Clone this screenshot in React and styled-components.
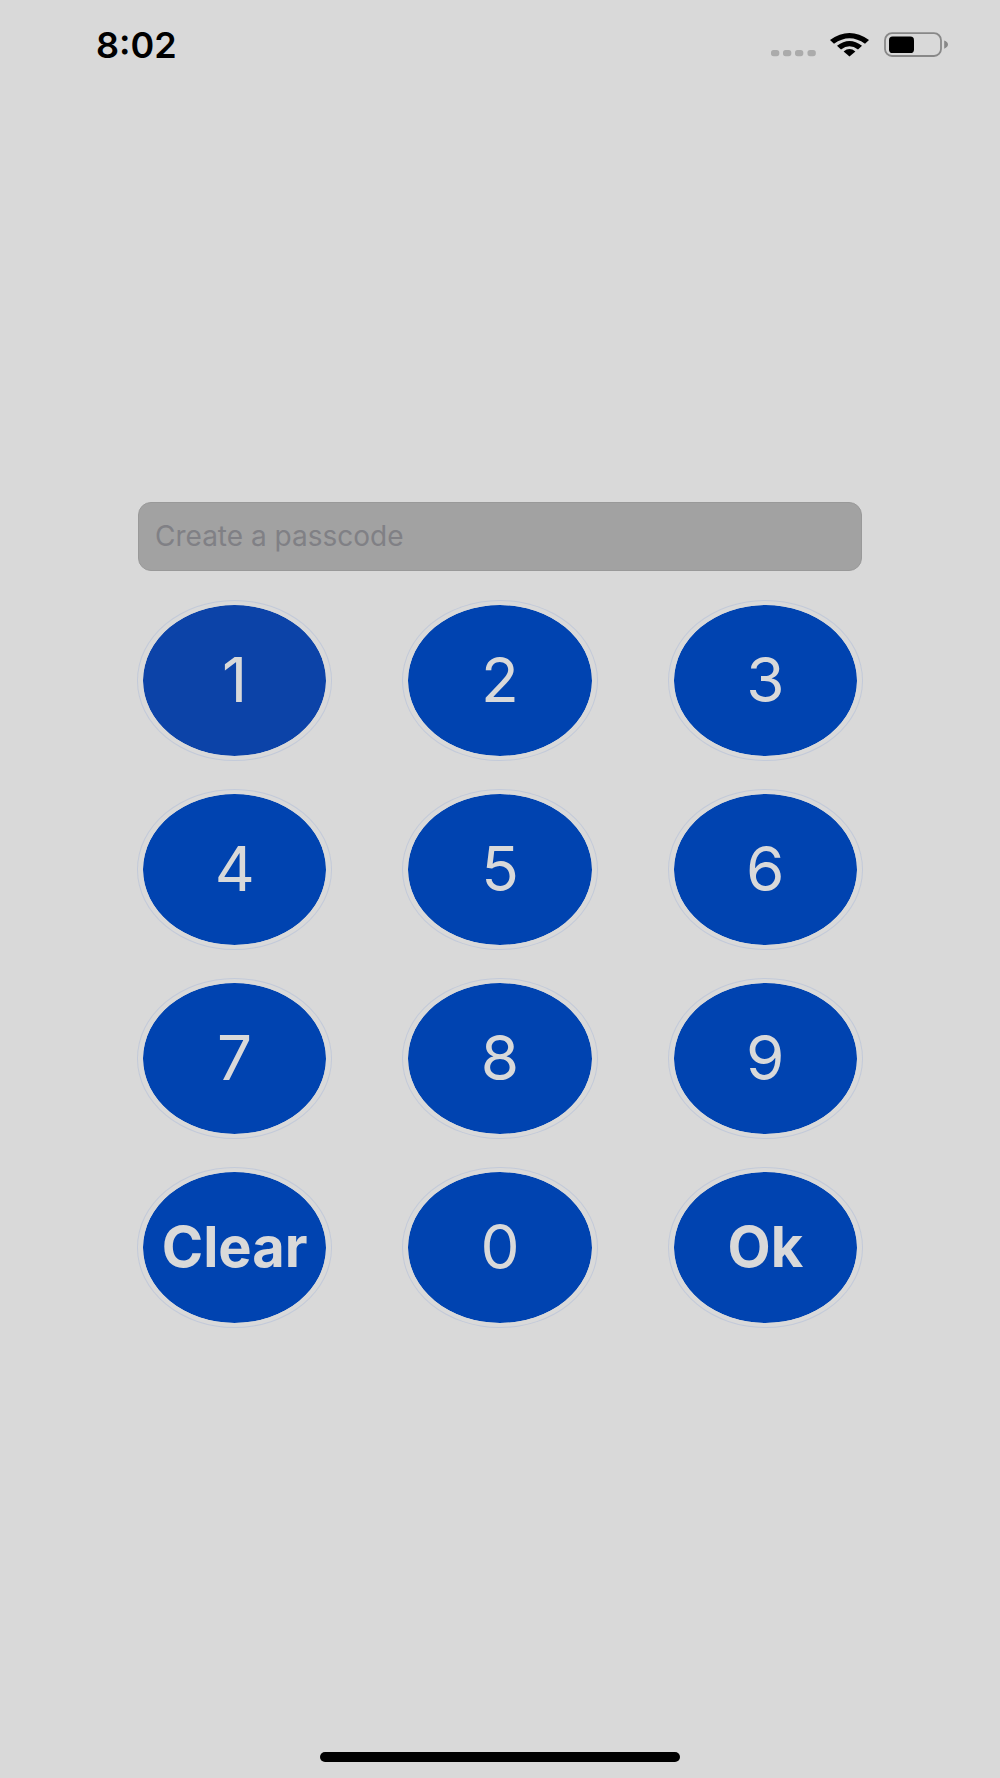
import React, { useState } from 'react';
import styled, { createGlobalStyle } from 'styled-components';

const GlobalStyle = createGlobalStyle`
  * {
    box-sizing: border-box;
  }
  body {
    margin: 0;
    background: #d9d9d9;
    font-family: Inter, "Liberation Sans", sans-serif;
  }
`;

const Screen = styled.div`
  display: flex;
  flex-direction: column;
  min-height: 100vh;
`;

const StatusBar = styled.header`
  display: flex;
  align-items: center;
  justify-content: space-between;
  height: 96px;
  padding: 0 52px 6px 96px;
`;

const Clock = styled.time`
  color: #000;
  font-size: 36px;
  font-weight: 600;
  line-height: 40px;
`;

const Main = styled.main`
  flex: 1;
  display: flex;
  flex-direction: column;
  justify-content: center;
  gap: 30px;
  padding: 0 138px;
`;

const PasscodeInput = styled.input`
  width: 100%;
  height: 69px;
  padding: 0 16px;
  border: 1px solid #999;
  border-radius: 13px;
  outline: none;
  background: #a2a2a2;
  color: #000;
  font-family: inherit;
  font-size: 28px;

  &::placeholder {
    color: #808085;
    opacity: 1;
  }
`;

const Keypad = styled.div`
  display: grid;
  grid-template-columns: repeat(3, 1fr);
  gap: 30px 72px;
`;

const Key = styled.button`
  height: 159px;
  padding: 0;
  border: solid #d9d9d9;
  border-width: 4px 5px;
  border-radius: 50%;
  box-shadow: 0 0 0 1px #c3cad9;
  background: ${props => (props.$pressed ? '#0c43a8' : '#0043b0')};
  background-clip: padding-box;
  color: #d9d9d9;
  font-family: inherit;
  font-size: ${props => (props.$action ? '56px' : '62px')};
  font-weight: ${props => (props.$action ? 700 : 400)};
  line-height: 64px;
  cursor: pointer;
`;

const HomeArea = styled.footer`
  display: flex;
  justify-content: center;
  padding: 20px 0 16px;
`;

const HomeIndicator = styled.div`
  width: 36%;
  height: 10px;
  border-radius: 5px;
  background: #000;
`;

const StatusIcons = () => (
  <svg width="178" height="26" viewBox="0 0 178 26" aria-hidden="true">
    {[1, 13, 25, 37.5].map(x => (
      <rect key={x} x={x} y="18" width="8.3" height="6.2" rx="2.6" fill="#ababab" />
    ))}
    <path d="M60 8 Q79.5 -6 99 8 L95 11.8 Q79.5 .8 64 11.8 Z" />
    <path d="M67 13.8 Q79.5 4 92 13.8 L88 17.4 Q79.5 11.2 71 17.4 Z" />
    <path d="M73.6 19.4 Q79.5 14.8 85.4 19.4 L79.5 24.4 Z" />
    <rect x="115" y="1.2" width="56" height="22.8" rx="7" fill="none" stroke="#888" strokeWidth="1.8" />
    <rect x="119" y="4.6" width="25" height="16.4" rx="3.6" />
    <path d="M174.2 8.5 Q178 10 178 12.5 Q178 15 174.2 16.8 Z" fill="#888" />
  </svg>
);

const keys = ['1', '2', '3', '4', '5', '6', '7', '8', '9', 'Clear', '0', 'Ok'];

const App = () => {
  const [passcode, setPasscode] = useState('');

  const press = (key) => {
    if (key === 'Clear') {
      setPasscode('');
    } else if (key !== 'Ok') {
      setPasscode(passcode + key);
    }
  };

  return (
    <Screen>
      <GlobalStyle />
      <StatusBar>
        <Clock>8:02</Clock>
        <StatusIcons />
      </StatusBar>
      <Main>
        <PasscodeInput
          type="password"
          aria-label="Create a passcode"
          placeholder="Create a passcode"
          value={passcode}
          onChange={e => setPasscode(e.target.value)}
        />
        <Keypad>
          {keys.map(key => (
            <Key
              key={key}
              type="button"
              $pressed={key === '1'}
              $action={key.length > 1}
              onClick={() => press(key)}
            >
              {key}
            </Key>
          ))}
        </Keypad>
      </Main>
      <HomeArea>
        <HomeIndicator />
      </HomeArea>
    </Screen>
  );
}

export default App;
